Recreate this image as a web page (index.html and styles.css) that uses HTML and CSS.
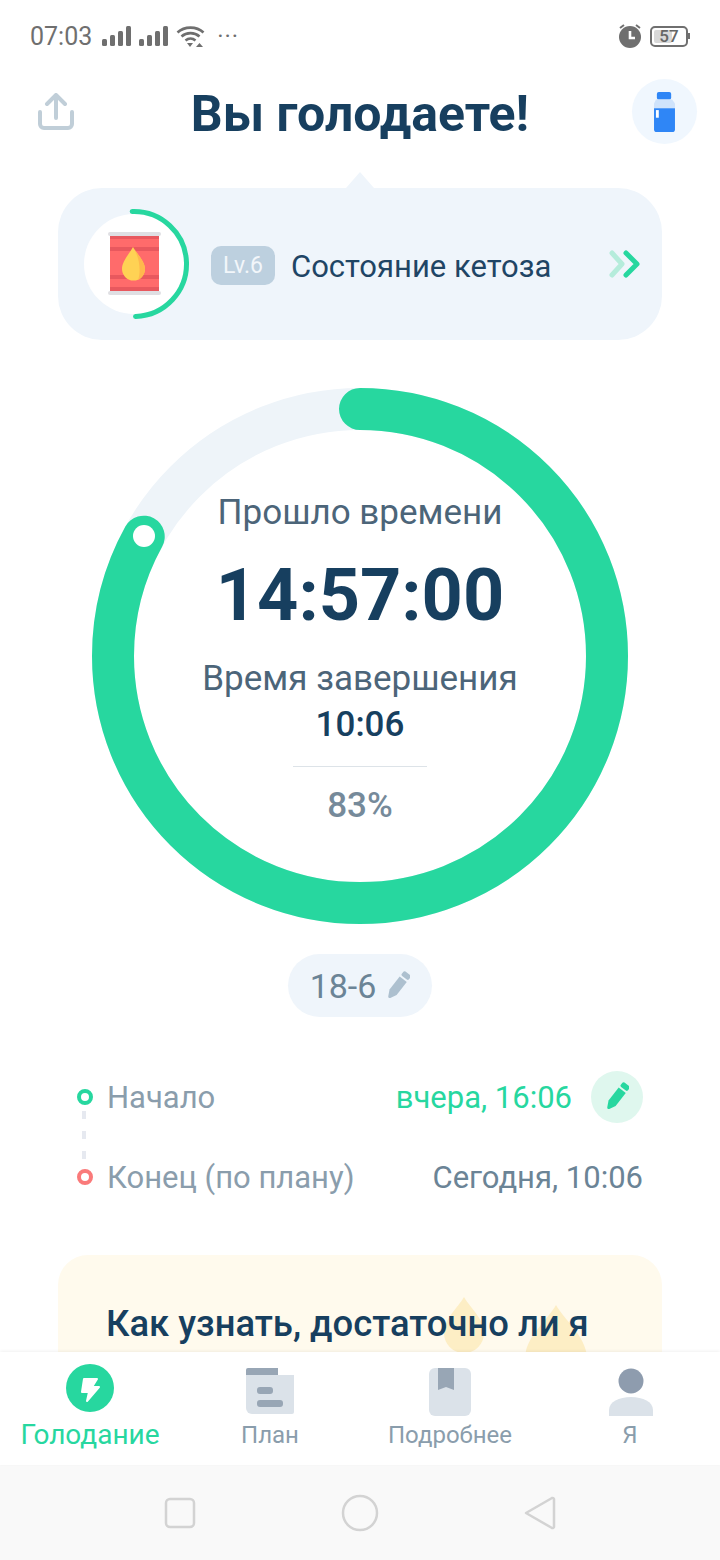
FILE: index.html
```html
<!DOCTYPE html>
<html lang="ru">
<head>
    <meta charset="UTF-8">
    <meta name="viewport" content="width=device-width, initial-scale=1.0">
    <title>Голодание</title>
    <link rel="stylesheet" href="styles.css">
</head>
<body>
    <svg class="defs" width="0" height="0">
        <symbol id="pencil" viewBox="0 0 24 30">
            <g transform="rotate(38 12 15)">
                <rect x="7.5" y="-1" width="9" height="5.5" rx="1.5"/>
                <path d="M7.5 6.5h9v16.5l-3.2 6.2a1.5 1.5 0 0 1-2.6 0L7.5 23z"/>
            </g>
        </symbol>
    </svg>

    <div class="phone">
        <div class="status">
            <span class="clock">07:03</span>
            <svg class="signal" width="30" height="20" viewBox="0 0 30 20"><rect x="0" y="13" width="5" height="7" rx="1.5"/><rect x="8" y="9" width="5" height="11" rx="1.5"/><rect x="16" y="5" width="5" height="15" rx="1.5"/><rect x="24" y="0" width="5" height="20" rx="1.5"/></svg>
            <svg class="signal" width="30" height="20" viewBox="0 0 30 20"><rect x="0" y="13" width="5" height="7" rx="1.5"/><rect x="8" y="9" width="5" height="11" rx="1.5"/><rect x="16" y="5" width="5" height="15" rx="1.5"/><rect x="24" y="0" width="5" height="20" rx="1.5"/></svg>
            <svg class="wifi" width="29" height="22" viewBox="0 0 29 22">
                <path d="M1.5 7.5C8.500 1 20.500 1 27.500 7.500M5.500 11.500C10.500 7 18.500 7 23.500 11.500M9.500 15.500C12.500 13 16.500 13 19.500 15.500" fill="none" stroke="#6f6f6f" stroke-width="2.6"/>
                <path d="M11 18h6l-3 4zM20 22h7l-3.500-4z" fill="#6f6f6f"/>
                <path d="M20 16h7l-3.500-4z" fill="#fff"/>
            </svg>
            <span class="more">···</span>
            <div class="status-right">
                <svg width="24" height="24" viewBox="0 0 24 24">
                    <path d="M2 4l4-3M22 4l-4-3" stroke="#6f6f6f" stroke-width="2" fill="none"/>
                    <circle cx="12" cy="13" r="11" fill="#6f6f6f"/>
                    <path d="M12 7v7h5" stroke="#fff" stroke-width="2.600" fill="none"/>
                </svg>
                <div class="battery"><span class="battery-fill"></span><span class="battery-num">57</span></div>
            </div>
        </div>

        <div class="header">
            <svg class="share" width="38" height="38" viewBox="0 0 38 38" fill="none" stroke="#c0ced8" stroke-width="4" stroke-linecap="round" stroke-linejoin="round">
                <path d="M19 3v22M10 11l9-9 9 9"/>
                <path d="M3 19v12a4 4 0 0 0 4 4h24a4 4 0 0 0 4-4V19"/>
            </svg>
            <h1 class="title">Вы голодаете!</h1>
            <div class="water">
                <svg width="23" height="40" viewBox="0 0 24 42">
                    <rect x="4" y="0" width="15" height="8" rx="2" fill="#2f86f6"/>
                    <path d="M3 8h17l3 4v5H1v-5z" fill="#cfe3fb"/>
                    <path d="M1 17h22v22a3 3 0 0 1-3 3H4a3 3 0 0 1-3-3z" fill="#2f86f6"/>
                    <rect x="3" y="19" width="3" height="8" fill="#fff"/>
                </svg>
            </div>
        </div>

        <div class="main">
            <div class="stage-card">
                <div class="stage-icon">
                    <svg width="116" height="116" viewBox="0 0 116 116">
                        <circle cx="58" cy="58" r="50" fill="#fff"/>
                        <circle cx="58" cy="58" r="52.500" fill="none" stroke="#27d79f" stroke-width="5" stroke-linecap="round" stroke-dasharray="165 330" transform="rotate(-92 58 58)"/>
                        <rect x="32" y="26" width="53" height="4" rx="2" fill="#dfdfe3"/>
                        <rect x="34" y="30" width="49" height="55" fill="#ff6b6b"/>
                        <rect x="32" y="85" width="53" height="4" rx="2" fill="#dfdfe3"/>
                        <rect x="34" y="30" width="49" height="3" fill="#e8585e"/>
                        <rect x="34" y="41" width="49" height="4" fill="#e8585e"/>
                        <rect x="34" y="69" width="49" height="4" fill="#e8585e"/>
                        <rect x="34" y="81" width="49" height="4" fill="#e8585e"/>
                        <path d="M57 41C60 47 69 55 69 63A11.500 11.500 0 0 1 46 63C46 55 54 47 57 41Z" fill="#ffd254"/>
                        <path d="M57 41C60 47 69 55 69 63C69 68 66 72 62 74C65 66 64 52 57 41Z" fill="#ffb84d"/>
                    </svg>
                </div>
                <span class="level">Lv.6</span>
                <span class="stage-name">Состояние кетоза</span>
                <svg class="chevrons" width="32" height="32" viewBox="0 0 32 32" fill="none" stroke-width="5" stroke-linecap="round" stroke-linejoin="round">
                    <path d="M4 5l10 11L4 27" stroke="#b5ecdb"/>
                    <path d="M18 5l11 11-11 11" stroke="#27d79f"/>
                </svg>
            </div>

            <div class="ring">
                <svg class="ring-svg" width="536" height="536" viewBox="0 0 536 536">
                    <circle cx="268" cy="268" r="247" fill="none" stroke="#eef4f9" stroke-width="42"/>
                    <circle cx="268" cy="268" r="247" fill="none" stroke="#27d79f" stroke-width="42" stroke-linecap="round" stroke-dasharray="1288 1552" transform="rotate(-90 268 268)"/>
                    <circle cx="52" cy="148" r="11" fill="#fff"/>
                </svg>
                <div class="ring-text">
                    <div class="ring-label">Прошло времени</div>
                    <div class="ring-time">14:57:00</div>
                    <div class="ring-label ring-label-end">Время завершения</div>
                    <div class="ring-end">10:06</div>
                    <div class="ring-line"></div>
                    <div class="ring-percent">83%</div>
                </div>
            </div>

            <div class="plan-row">
                <div class="plan-pill">18-6 <svg class="pencil-gray" width="24" height="30"><use href="#pencil"/></svg></div>
            </div>

            <div class="times">
                <div class="time-row">
                    <span class="dot dot-start"></span>
                    <span class="time-label">Начало</span>
                    <span class="time-value time-green">вчера, 16:06</span>
                    <span class="edit"><svg class="pencil-green" width="24" height="30"><use href="#pencil"/></svg></span>
                </div>
                <div class="time-row">
                    <span class="dot dot-end"></span>
                    <span class="time-label">Конец (по плану)</span>
                    <span class="time-value">Сегодня, 10:06</span>
                </div>
            </div>

            <div class="tip-card">
                <svg class="tip-drops" width="200" height="100" viewBox="0 0 200 100">
                    <path d="M65 0C72 12 85 22 85 36A20 20 0 0 1 45 36C45 22 58 12 65 0Z" fill="#fdeec5"/>
                    <path d="M157 8C166 24 188 40 188 62A31 31 0 0 1 126 62C126 40 148 24 157 8Z" fill="#fdeec5"/>
                </svg>
                <h2 class="tip-title">Как узнать, достаточно ли я</h2>
            </div>
        </div>

        <div class="tabs">
            <div class="tab tab-active">
                <svg width="52" height="52" viewBox="0 0 52 52">
                    <circle cx="26" cy="24" r="24" fill="#27d79f"/>
                    <path d="M20 15h13l-5 8h7L23 37l2-9h-7z" fill="#fff" stroke="#fff" stroke-width="2" stroke-linejoin="round"/>
                </svg>
                <span class="tab-name">Голодание</span>
            </div>
            <div class="tab">
                <svg width="52" height="52" viewBox="0 0 52 52">
                    <path d="M2 6a2 2 0 0 1 2-2h30v7H2z" fill="#98a6b5"/>
                    <path d="M2 11h48v37a2 2 0 0 1-2 2H8a6 6 0 0 1-6-6z" fill="#dbe2e9"/>
                    <rect x="13" y="23" width="16" height="7" rx="3" fill="#98a6b5"/>
                    <rect x="13" y="36" width="26" height="7" rx="3" fill="#98a6b5"/>
                </svg>
                <span class="tab-name">План</span>
            </div>
            <div class="tab">
                <svg width="52" height="52" viewBox="0 0 52 52">
                    <rect x="5" y="4" width="42" height="48" rx="6" fill="#dbe2e9"/>
                    <path d="M14 4h16v22l-8-3-8 3z" fill="#98a6b5"/>
                </svg>
                <span class="tab-name">Подробнее</span>
            </div>
            <div class="tab">
                <svg width="52" height="52" viewBox="0 0 52 52">
                    <circle cx="27" cy="17" r="12.500" fill="#8e9cae"/>
                    <path d="M5 52v-6c0-8 10-13 22-13s22 5 22 13v6z" fill="#dbe2e9"/>
                </svg>
                <span class="tab-name">Я</span>
            </div>
        </div>

        <div class="navbar">
            <svg width="32" height="32" viewBox="0 0 32 32"><rect x="2" y="2" width="28" height="28" rx="4"/></svg>
            <svg width="38" height="38" viewBox="0 0 38 38"><circle cx="19" cy="19" r="17"/></svg>
            <svg width="34" height="38" viewBox="0 0 34 38"><path d="M3 19L29 4a1.500 1.500 0 0 1 2 1v28a1.500 1.500 0 0 1-2 1z" stroke-linejoin="round"/></svg>
        </div>
    </div>
</body>
</html>
```

FILE: styles.css
```css
* {
    box-sizing: border-box;
}
body {
    margin: 0;
    font-family: Roboto, "Noto Sans", sans-serif;
    background: #fff;
}
.defs {
    display: block;
    height: 0;
}
.phone {
    width: 720px;
    height: 1560px;
    display: flex;
    flex-direction: column;
    overflow: hidden;
}

/* status bar */
.status {
    height: 72px;
    flex: none;
    display: flex;
    align-items: center;
    padding: 0 30px;
    color: #6f6f6f;
}
.clock {
    font-size: 25px;
    margin-right: 10px;
}
.signal {
    fill: #6f6f6f;
    margin-right: 7px;
}
.more {
    font-size: 24px;
    margin-left: 12px;
    letter-spacing: 1px;
}
.status-right {
    margin-left: auto;
    display: flex;
    align-items: center;
    gap: 8px;
}
.battery {
    position: relative;
    width: 38px;
    height: 21px;
    border: 2px solid #6f6f6f;
    border-radius: 5px;
    display: flex;
    align-items: center;
    justify-content: center;
    margin-right: 2px;
}
.battery::after {
    content: "";
    position: absolute;
    right: -4px;
    top: 5px;
    width: 2px;
    height: 6px;
    background: #6f6f6f;
}
.battery-fill {
    position: absolute;
    left: 2px;
    top: 2px;
    bottom: 2px;
    width: 18px;
    background: #d8d8d8;
    border-radius: 2px;
}
.battery-num {
    position: relative;
    font-size: 17px;
    font-weight: 500;
    color: #666;
}

/* title */
.header {
    height: 84px;
    flex: none;
    display: grid;
    grid-template-columns: 1fr auto 1fr;
    align-items: center;
    padding: 0 23px;
}
.share {
    margin: 0 0 5px 14px;
}
.title {
    margin: 0;
    font-size: 50px;
    font-weight: 700;
    color: #173f5f;
}
.water {
    width: 65px;
    height: 65px;
    margin-bottom: 5px;
    justify-self: end;
    border-radius: 50%;
    background: #f0f7fe;
    display: flex;
    align-items: center;
    justify-content: center;
}

.main {
    flex: 1;
    min-height: 0;
    overflow: hidden;
}

/* fasting stage */
.stage-card {
    position: relative;
    height: 152px;
    margin: 32px 58px 0;
    padding: 0 22px 0 18px;
    background: #eff5fb;
    border-radius: 44px;
    display: flex;
    align-items: center;
}
.stage-card::before {
    content: "";
    position: absolute;
    top: -16px;
    left: 288px;
    border-left: 14px solid transparent;
    border-right: 14px solid transparent;
    border-bottom: 16px solid #eff5fb;
}
.stage-icon {
    width: 116px;
    height: 116px;
    margin-right: 19px;
}
.level {
    width: 64px;
    height: 39px;
    margin: 3px 16px 0 0;
    line-height: 39px;
    text-align: center;
    font-size: 23px;
    color: #f2f6fa;
    background: #bdd0df;
    border-radius: 10px;
}
.stage-name {
    margin-top: 4px;
    font-size: 31px;
    color: #1f4565;
}
.chevrons {
    margin-left: auto;
}

/* timer ring */
.ring {
    display: grid;
    width: 536px;
    height: 536px;
    margin: 48px auto 0;
}
.ring-svg,
.ring-text {
    grid-area: 1 / 1;
}
.ring-text {
    padding-top: 105px;
    text-align: center;
    display: flex;
    flex-direction: column;
    align-items: center;
}
.ring-label {
    font-size: 35px;
    line-height: 40px;
    color: #4c6579;
}
.ring-label-end {
    margin-top: 21px;
}
.ring-time {
    margin-top: 21px;
    font-size: 72px;
    line-height: 84px;
    font-weight: 700;
    color: #173f5f;
}
.ring-end {
    margin-top: 6px;
    font-size: 35px;
    line-height: 40px;
    font-weight: 500;
    color: #173f5f;
}
.ring-line {
    width: 134px;
    height: 1px;
    margin-top: 21px;
    background: #dde3e8;
}
.ring-percent {
    margin-top: 19px;
    font-size: 35px;
    line-height: 40px;
    font-weight: 500;
    color: #768a9a;
}

/* plan pill */
.plan-row {
    display: flex;
    justify-content: center;
    margin-top: 30px;
}
.plan-pill {
    width: 144px;
    height: 63px;
    border-radius: 32px;
    background: #eff5fb;
    display: flex;
    align-items: center;
    justify-content: center;
    gap: 10px;
    font-size: 34px;
    color: #6b8496;
}
.pencil-gray {
    fill: #adc0cf;
}
.pencil-green {
    fill: #27d79f;
}

/* start and end rows */
.times {
    margin: 54px 77px 0;
    display: flex;
    flex-direction: column;
    gap: 28px;
}
.time-row {
    height: 52px;
    display: flex;
    align-items: center;
    font-size: 31px;
}
.dot {
    position: relative;
    width: 16px;
    height: 16px;
    border-radius: 50%;
    border: 4.5px solid #27d79f;
    margin-right: 14px;
}
.dot-end {
    border-color: #fa7a7a;
}
.dot-start::after {
    content: "";
    position: absolute;
    left: 1px;
    top: 18px;
    width: 4px;
    height: 48px;
    background: repeating-linear-gradient(#e6e9f0 0 8px, transparent 8px 20px);
}
.time-label {
    color: #8a9dac;
}
.time-value {
    margin-left: auto;
    color: #6b8496;
}
.time-green {
    color: #27d79f;
}
.edit {
    width: 52px;
    height: 52px;
    margin-left: 19px;
    border-radius: 50%;
    background: #dff7ee;
    display: flex;
    align-items: center;
    justify-content: center;
}

/* tip card, cut off by the tab bar */
.tip-card {
    position: relative;
    height: 300px;
    margin: 52px 58px 0;
    padding: 48px 48px 0;
    background: #fffaed;
    border-radius: 30px;
}
.tip-drops {
    position: absolute;
    left: 341px;
    top: 42px;
}
.tip-title {
    position: relative;
    margin: 0;
    font-size: 36.4px;
    line-height: 42px;
    font-weight: 500;
    color: #173f5f;
}

/* bottom tabs */
.tabs {
    position: relative;
    height: 113px;
    flex: none;
    background: #fff;
    box-shadow: 0 -1px 3px rgba(0, 0, 0, 0.06);
    display: grid;
    grid-template-columns: repeat(4, 1fr);
}
.tab {
    padding-top: 12px;
    display: flex;
    flex-direction: column;
    align-items: center;
}
.tab-name {
    margin-top: 4px;
    font-size: 24px;
    line-height: 30px;
    color: #8a9dac;
}
.tab-active .tab-name {
    font-size: 28px;
    color: #27d79f;
}

/* android buttons */
.navbar {
    height: 95px;
    flex: none;
    padding: 0 90px;
    background: #f9f9f9;
    display: grid;
    grid-template-columns: repeat(3, 1fr);
    align-items: center;
    justify-items: center;
}
.navbar svg {
    fill: none;
    stroke: #d3d3d3;
    stroke-width: 2.500;
}
```
